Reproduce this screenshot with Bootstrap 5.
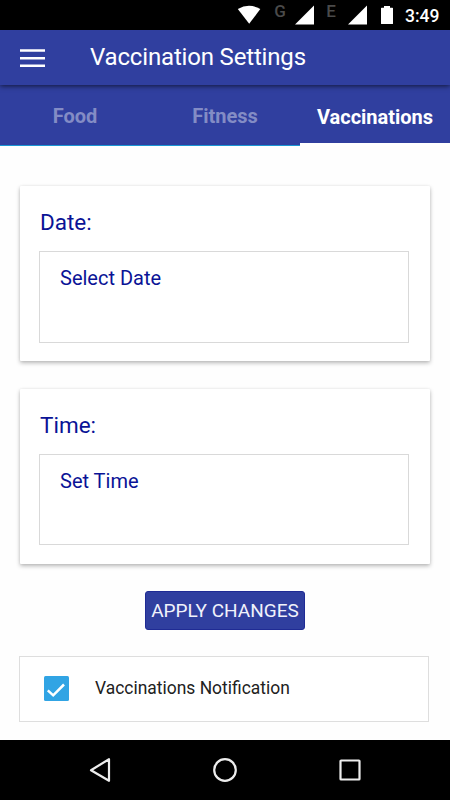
<!DOCTYPE html>
<html lang="en">
<head>
<meta charset="utf-8">
<meta name="viewport" content="width=device-width, initial-scale=1">
<title>Vaccination Settings</title>
<link href="https://cdn.jsdelivr.net/npm/bootstrap@5.3.0/dist/css/bootstrap.min.css" rel="stylesheet">
<style>
body{font-family:Roboto,sans-serif;height:800px;overflow:hidden;background:#fefefe}
svg{display:block;flex:none}
.status-bar{height:30px}
.app-bar{height:55px;background:#303f9f;box-shadow:0 1px 5px rgba(0,0,0,.65);z-index:2}
.app-title{font-size:24px;line-height:55px;padding-left:44px;letter-spacing:-.17px}
.tab-strip{height:61px;background:#303f9f}
.tab-strip .nav-link{height:61px;line-height:60px;font-size:20px;font-weight:700;padding:1px 0 0;color:#838cc5;border-radius:0;border-bottom:1px solid #1a96d4}
.tab-strip .nav-link.active{color:#fff;border-bottom:3px solid #fff;padding:2px 0 0}
.panel{width:410px;height:175px;border-radius:1px;box-shadow:0 2px 4px rgba(0,0,0,.28),0 0 3px rgba(0,0,0,.06);padding:0 21px 0 19px;color:#0a1396;background:#fff}
.panel h2{font-size:22.5px;line-height:30px;margin:21px 0 14px 1px;font-weight:400}
.panel-date{margin-top:40px}
.panel-time{margin-top:28px}
.field{height:92px;border:1px solid #d9d9d9;padding:11px 20px;font-size:20px;line-height:30px}
.panel-time .field{height:91px}
.btn-apply{width:160px;height:39px;margin-top:27px;background:#303f9f;border:1px solid #1f2b94;border-radius:3px;font-size:19px;line-height:38px;color:#f0f2fb}
.notice{width:410px;height:66px;margin:26px 0 0 19px;border:1px solid #dedede;padding-left:24px;gap:26px;font-size:17.45px;color:#212121;background:#fff}
.notice span{padding-bottom:2px}
.notice svg{margin-top:-1px}
.nav-keys{height:60px}
</style>
<script src="https://cdn.jsdelivr.net/npm/bootstrap@5.3.0/dist/js/bootstrap.bundle.min.js"></script>
</head>
<body class="d-flex flex-column">
<div class="status-bar bg-black text-white d-flex">
<svg width="450" height="30" viewBox="0 0 450 30" font-family="Roboto, sans-serif">
<path d="M237.800 9Q249 2.600 260.300 9L249.200 23.800Z" fill="#fff"/>
<text x="274.200" y="16.800" font-size="17" font-weight="500" fill="#4a4a4a">G</text>
<path d="M314 5.500V24.500H295Z" fill="#fff"/>
<text x="326.200" y="16.500" font-size="17" font-weight="500" fill="#4a4a4a">E</text>
<path d="M367 5.500V24.500H348Z" fill="#fff"/>
<path d="M384 6h6v1.700h2.400q.6 0 .6.6V23.400q0 .6-.6.6H381.600q-.6 0-.6-.6V8.300q0-.6.6-.6H384Z" fill="#fff"/>
<text x="405" y="22" font-size="17.500" font-weight="500" fill="#fff">3:49</text>
</svg>
</div>
<header class="app-bar d-flex align-items-center position-relative text-white">
<svg class="ms-3" width="30" height="30" viewBox="0 0 30 30"><path d="M4 7.500h25M4 15.300h25M4 22.700h25" stroke="#fff" stroke-width="2.500"/></svg>
<span class="app-title">Vaccination Settings</span>
</header>
<nav class="tab-strip nav nav-justified flex-nowrap">
<a class="nav-link w-100" href="#">Food</a>
<a class="nav-link w-100" href="#">Fitness</a>
<a class="nav-link w-100 active" href="#">Vaccinations</a>
</nav>
<main class="flex-grow-1 d-flex flex-column">
<section class="panel panel-date mx-auto d-flex flex-column">
<h2>Date:</h2>
<div class="field">Select Date</div>
</section>
<section class="panel panel-time mx-auto d-flex flex-column">
<h2>Time:</h2>
<div class="field">Set Time</div>
</section>
<button class="btn btn-apply mx-auto p-0">APPLY CHANGES</button>
<label class="notice d-flex align-items-center">
<svg width="25" height="25" viewBox="0 0 25 25"><rect width="25" height="25" rx="1.500" fill="#31a4e4"/><path d="M3.800 14.300L9.200 19.300L20 8.500" fill="none" stroke="#fff" stroke-width="2.500"/></svg>
<span>Vaccinations Notification</span>
</label>
</main>
<footer class="nav-keys bg-black">
<svg width="450" height="60" viewBox="0 0 450 60" fill="none" stroke="#ededed" stroke-width="2.200" stroke-linejoin="round"><path d="M91 30.200L109 19.200V40.800Z"/><circle cx="225" cy="30" r="10.800"/><rect x="340.500" y="20.500" width="19" height="19" rx=".6"/></svg>
</footer>
</body>
</html>
